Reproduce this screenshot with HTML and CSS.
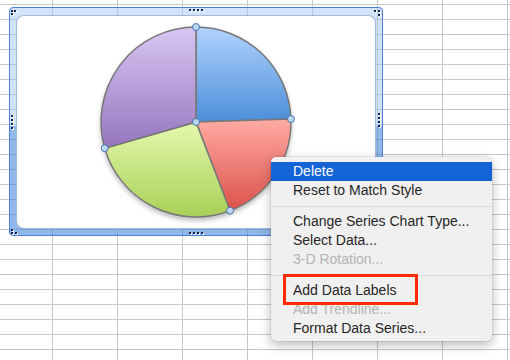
FILE: index.html
```html
<!DOCTYPE html>
<html lang="en">
    <head>
        <meta charset="UTF-8" />
        <title>Chart Context Menu</title>
        <link rel="stylesheet" href="styles.css">
    </head>
    <body>
        <div id="sheet">
            <div id="chart-frame">
                <div id="chart-area">
                    <svg id="pie" width="360" height="214" viewBox="16 15 360 214">
                        <defs>
                            <linearGradient id="g-blue" x1="0" y1="0" x2="0" y2="1">
                                <stop offset="0" stop-color="#b0d2fd" />
                                <stop offset="1" stop-color="#4c8ed9" />
                            </linearGradient>
                            <linearGradient id="g-red" x1="0" y1="0" x2="0" y2="1">
                                <stop offset="0" stop-color="#ffaba4" />
                                <stop offset="1" stop-color="#dd524b" />
                            </linearGradient>
                            <linearGradient id="g-green" x1="0" y1="0" x2="0" y2="1">
                                <stop offset="0" stop-color="#e4f9ad" />
                                <stop offset="1" stop-color="#a8d057" />
                            </linearGradient>
                            <linearGradient id="g-purple" x1="0" y1="0" x2="0" y2="1">
                                <stop offset="0" stop-color="#d8c6f2" />
                                <stop offset="1" stop-color="#9676bf" />
                            </linearGradient>
                            <filter id="pie-shadow" x="-10%" y="-10%" width="120%" height="125%">
                                <feDropShadow dx="0" dy="3" stdDeviation="2" flood-color="#000" flood-opacity="0.25" />
                            </filter>
                        </defs>
                        <g class="slices" filter="url(#pie-shadow)">
                            <path fill="url(#g-blue)" d="M196 122 L196 27 A95 95 0 0 1 290.95 119.02 Z" />
                            <path fill="url(#g-red)" d="M196 122 L290.95 119.02 A95 95 0 0 1 230.05 210.69 Z" />
                            <path fill="url(#g-green)" d="M196 122 L230.05 210.69 A95 95 0 0 1 104.68 148.19 Z" />
                            <path fill="url(#g-purple)" d="M196 122 L104.68 148.19 A95 95 0 0 1 196 27 Z" />
                        </g>
                        <g class="handles">
                            <circle cx="196" cy="27" r="3.5" />
                            <circle cx="290.95" cy="119.02" r="3.5" />
                            <circle cx="230.05" cy="210.69" r="3.5" />
                            <circle cx="104.68" cy="148.19" r="3.5" />
                            <circle cx="196" cy="122" r="3.5" />
                        </g>
                    </svg>
                </div>
                <!-- resize grips -->
                <span class="grip" style="left: 1px; top: 2px"></span>
                <span class="grip" style="left: 4px; top: 2px"></span>
                <span class="grip" style="left: 1px; top: 5px"></span>
                <span class="grip" style="left: 179px; top: 1px"></span>
                <span class="grip" style="left: 183px; top: 1px"></span>
                <span class="grip" style="left: 187px; top: 1px"></span>
                <span class="grip" style="left: 191px; top: 1px"></span>
                <span class="grip" style="left: 364px; top: 2px"></span>
                <span class="grip" style="left: 368px; top: 2px"></span>
                <span class="grip" style="left: 368px; top: 6px"></span>
                <span class="grip" style="left: 1px; top: 107px"></span>
                <span class="grip" style="left: 1px; top: 111px"></span>
                <span class="grip" style="left: 1px; top: 115px"></span>
                <span class="grip" style="left: 1px; top: 119px"></span>
                <span class="grip" style="left: 368px; top: 105px"></span>
                <span class="grip" style="left: 368px; top: 109px"></span>
                <span class="grip" style="left: 368px; top: 113px"></span>
                <span class="grip" style="left: 368px; top: 117px"></span>
                <span class="grip" style="left: 1px; top: 221px"></span>
                <span class="grip" style="left: 1px; top: 224px"></span>
                <span class="grip" style="left: 5px; top: 224px"></span>
                <span class="grip" style="left: 179px; top: 224px"></span>
                <span class="grip" style="left: 183px; top: 224px"></span>
                <span class="grip" style="left: 187px; top: 224px"></span>
                <span class="grip" style="left: 191px; top: 224px"></span>
            </div>

            <div id="context-menu">
                <div class="item selected">Delete</div>
                <div class="item">Reset to Match Style</div>
                <div class="separator"></div>
                <div class="item">Change Series Chart Type...</div>
                <div class="item">Select Data...</div>
                <div class="item disabled">3-D Rotation...</div>
                <div class="separator"></div>
                <div class="item">Add Data Labels</div>
                <div class="item disabled">Add Trendline...</div>
                <div class="item">Format Data Series...</div>
            </div>
            <div id="callout"></div>
        </div>
    </body>
</html>
```

FILE: styles.css
```css
body {
    margin: 0;
    background-color: #fff;
    font-family: "Liberation Sans", Arial, sans-serif;
}
#sheet {
    position: relative;
    width: 510px;
    height: 360px;
    overflow: hidden;
    background-color: #fff;
    background-image:
        linear-gradient(to right, #c8c8c8 1px, transparent 1px),
        linear-gradient(to bottom, #c8c8c8 1px, transparent 1px);
    background-size: 65px 15px;
    background-position: 52px 4px;
}

#chart-frame {
    position: absolute;
    left: 9px;
    top: 7px;
    width: 372px;
    height: 227px;
    padding: 7px 6px 6px 6px;
    box-sizing: border-box;
    width: 374px;
    height: 229px;
    border: 1px solid #4c7fd8;
    border-radius: 4px;
    background: linear-gradient(to bottom, rgba(165, 200, 246, 0.5) 0%, rgba(165, 200, 246, 0.5) 52%, rgba(70, 135, 220, 0.58) 52%, rgba(70, 135, 220, 0.6) 100%);
}
#chart-area {
    width: 360px;
    height: 214px;
    box-sizing: border-box;
    background-color: #fff;
    border: 1px solid rgba(90, 125, 190, 0.55);
    border-radius: 8px;
    overflow: hidden;
}
#pie {
    display: block;
    margin: -1px;
}
.slices path {
    stroke: #777;
    stroke-width: 1.5;
    stroke-linejoin: round;
}
.handles circle {
    fill: #bcd6f2;
    stroke: #4a76ad;
    stroke-width: 1;
}
.grip {
    position: absolute;
    width: 2px;
    height: 2px;
    background-color: #14234f;
    box-shadow: 1px 1px 0 #fff;
}

#context-menu {
    position: absolute;
    left: 271px;
    top: 157px;
    width: 221px;
    height: 184px;
    box-sizing: border-box;
    padding-top: 5px;
    background-color: #f0f0f0;
    border-radius: 5px;
    box-shadow: 0px 4px 12px rgba(0, 0, 0, 0.28), 0px 0px 0px 0.5px rgba(0, 0, 0, 0.12);
    font-size: 14px;
    color: #262626;
}
.item {
    height: 19px;
    line-height: 19px;
    padding-left: 22px;
    white-space: nowrap;
}
.item.selected {
    background-color: #1463d7;
    color: #fff;
}
.item.disabled {
    color: #b4b4b4;
}
.separator {
    height: 1px;
    margin: 6px 0 5px 0;
    background-color: #d9d9d9;
}
#callout {
    position: absolute;
    left: 283px;
    top: 274px;
    width: 135px;
    height: 31px;
    box-sizing: border-box;
    border: 3px solid #ff2a00;
}
```
